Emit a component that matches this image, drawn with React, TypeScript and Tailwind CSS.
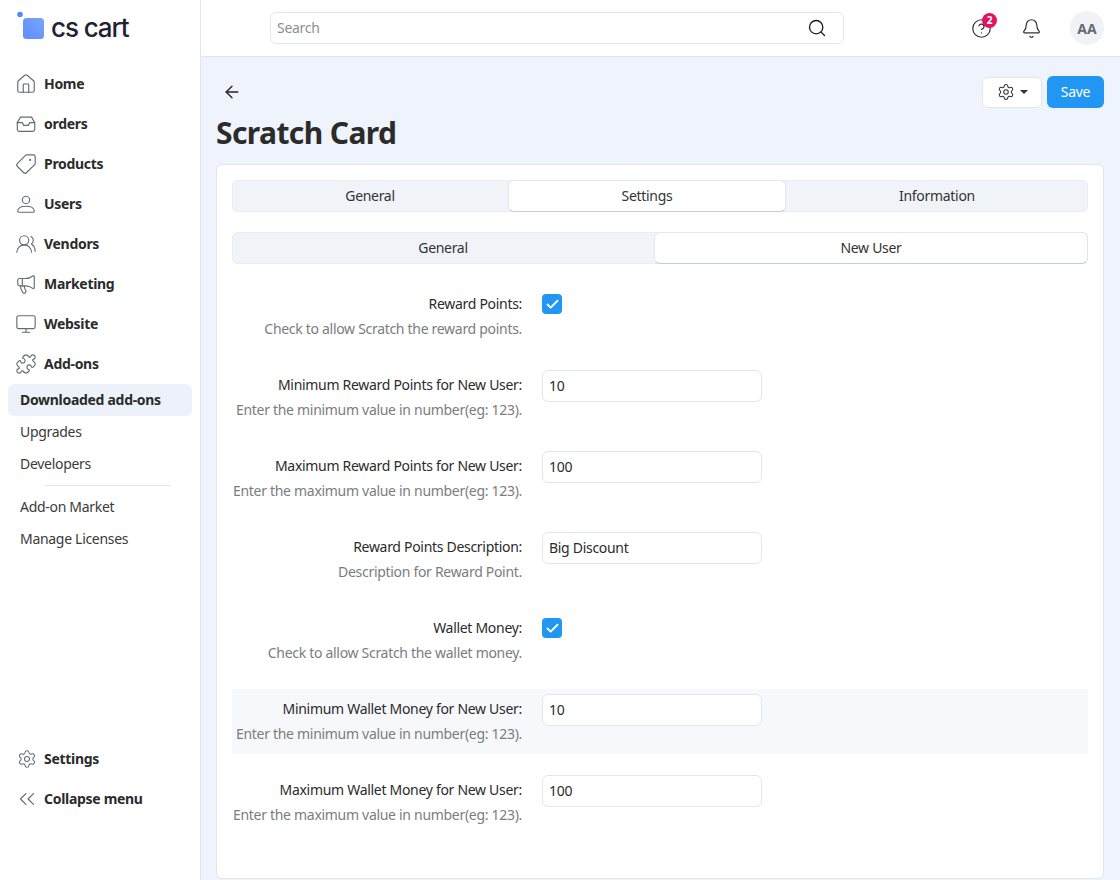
import { ArrowLeft, Bell, Check, ChevronsLeft, CircleHelp, House, Megaphone, Monitor, Puzzle, Search, Settings, Tag, UsersRound } from "lucide-react";
import type { ReactNode } from "react";

const ic = { size: 22, strokeWidth: 1.25 };

function InboxIcon() {
  return (
    <svg width="22" height="22" viewBox="0 0 24 24" fill="none" stroke="currentColor" strokeWidth="1.25" strokeLinejoin="round" strokeLinecap="round">
      <path d="M6 4.5h12l3.5 6v7.5a2 2 0 0 1-2 2h-15a2 2 0 0 1-2-2v-7.5z" />
      <path d="M2.5 10.5H8l1.5 3h5l1.5-3h5.5" />
    </svg>
  );
}

function UserIcon() {
  return (
    <svg width="22" height="22" viewBox="0 0 24 24" fill="none" stroke="currentColor" strokeWidth="1.25" strokeLinejoin="round">
      <circle cx="12" cy="7.5" r="4" />
      <path d="M4 21c-.6 0-1-.4-1-1 0-3.2 3.4-5.5 9-5.5s9 2.3 9 5.5c0 .6-.4 1-1 1z" />
    </svg>
  );
}

function NavItem({ icon, label }: { icon: ReactNode; label: string }) {
  return (
    <div className="flex h-10 items-center pl-[15px]">
      <span className="flex w-[29px] text-[#666b70]">{icon}</span>
      <span className="pb-[2px] text-[14px] font-bold text-[#2b2b2b]">{label}</span>
    </div>
  );
}

function SubItem({ label, active }: { label: string; active?: boolean }) {
  return (
    <div className={`mx-2 flex h-8 items-center rounded-md px-3 pb-[2px] text-[14px] ${active ? "bg-[#edf1f9] font-bold text-[#2b2b2b]" : "text-[#3a3a3a]"}`}>
      {label}
    </div>
  );
}

function Sidebar() {
  return (
    <aside className="flex h-[880px] w-[201px] shrink-0 flex-col border-r border-[#e2e6ee] bg-white pb-[61px]">
      <div className="flex h-[64px] shrink-0 items-start pl-[17px] pt-[11px]">
        <svg width="30" height="28" viewBox="0 0 30 28">
          <defs>
            <linearGradient id="logo" x1="0" y1="1" x2="1" y2="0">
              <stop offset="0" stopColor="#5f8bff" />
              <stop offset="1" stopColor="#78a6fb" />
            </linearGradient>
          </defs>
          <circle cx="3" cy="3.5" r="2.8" fill="#4f8df5" />
          <rect x="6" y="7" width="21" height="21" rx="3.5" fill="url(#logo)" />
        </svg>
        <span className="ml-[4px] mt-[1px] text-[26px] font-medium leading-[32px] tracking-[-1.1px] text-[#1f2233] [font-family:Inter,sans-serif]">cs cart</span>
      </div>
      <NavItem icon={<House {...ic} />} label="Home" />
      <NavItem icon={<InboxIcon />} label="orders" />
      <NavItem icon={<Tag {...ic} className="-scale-x-100" />} label="Products" />
      <NavItem icon={<UserIcon />} label="Users" />
      <NavItem icon={<UsersRound {...ic} />} label="Vendors" />
      <NavItem icon={<Megaphone {...ic} />} label="Marketing" />
      <NavItem icon={<Monitor {...ic} />} label="Website" />
      <NavItem icon={<Puzzle {...ic} />} label="Add-ons" />
      <SubItem label="Downloaded add-ons" active />
      <SubItem label="Upgrades" />
      <SubItem label="Developers" />
      <div className="my-[5px] ml-[45px] mr-[30px] h-px bg-[#dfe4ea]" />
      <SubItem label="Add-on Market" />
      <SubItem label="Manage Licenses" />
      <div className="mt-auto">
        <NavItem icon={<Settings size={20} strokeWidth={1.25} className="ml-[2px]" />} label="Settings" />
        <NavItem icon={<ChevronsLeft size={26} strokeWidth={1.1} className="-my-1 -ml-[1px]" />} label="Collapse menu" />
      </div>
    </aside>
  );
}

function Header() {
  return (
    <header className="flex h-[57px] shrink-0 items-center border-b border-[#e2e6ee] bg-white pl-[69px] pr-4">
      <div className="flex h-8 w-[574px] shrink-0 items-center justify-between rounded-md border border-[#e2e6ee] px-[6px] pr-4">
        <span className="pb-[2px] text-[14px] text-[#8a8f96]">Search</span>
        <Search size={20} strokeWidth={1.6} className="text-[#1c1c1c]" />
      </div>
      <div className="relative ml-[127px] text-[#333]">
        <CircleHelp size={21} strokeWidth={1.4} />
        <span className="absolute -right-[5px] -top-[5px] flex h-[15px] w-[15px] items-center justify-center rounded-full bg-[#df1360] text-[10px] font-bold leading-none text-white">2</span>
      </div>
      <Bell size={21} strokeWidth={1.4} className="ml-[29px] text-[#333]" />
      <div className="ml-[28px] flex h-[34px] w-[34px] items-center justify-center rounded-full bg-[#f0f2f6] text-[14px] font-bold tracking-normal text-[#666b73]">AA</div>
    </header>
  );
}

function CheckBox() {
  return (
    <span className="mt-[5px] flex h-5 w-5 items-center justify-center rounded-[4px] bg-[#2196f3] text-white">
      <Check size={15} strokeWidth={3} />
    </span>
  );
}

function Row({ label, hint, value, check, shaded }: { label: string; hint: string; value?: string; check?: boolean; shaded?: boolean }) {
  return (
    <div className={`mb-4 flex h-[65px] pt-[5px] ${shaded ? "bg-[#f7f8fb]" : ""}`}>
      <div className="w-[290px] shrink-0 pt-[5px] text-right">
        <div className="text-[14px] leading-[20px] text-[#2b2b2b]">{label}</div>
        <div className="mt-[5px] whitespace-nowrap text-[14px] leading-[20px] text-[#7a7d80]">{hint}</div>
      </div>
      <div className="ml-5">
        {check ? (
          <CheckBox />
        ) : (
          <div className="flex h-8 w-[220px] items-center rounded-md border border-[#e2e6ee] bg-white px-[6px] pb-[2px] text-[14px] text-[#2b2b2b]">{value}</div>
        )}
      </div>
    </div>
  );
}

function Tab({ label, active, className }: { label: string; active?: boolean; className: string }) {
  return (
    <div className={`flex items-center justify-center rounded-md pb-[2px] text-[14px] text-[#333] ${active ? "border border-[#e2e6ee] border-b-[#c3cde0] bg-white" : ""} ${className}`}>
      {label}
    </div>
  );
}

export default function App() {
  return (
    <div className="flex h-[880px] w-[1120px] overflow-hidden bg-[#eff3fb] tracking-[-0.3px] [font-family:'Noto_Sans',sans-serif]">
      <Sidebar />
      <div className="flex min-w-0 flex-1 flex-col">
        <Header />
        <main className="flex flex-1 flex-col pb-px pl-[15px] pr-4">
          <div className="flex h-[50px] shrink-0 items-center justify-between pt-[20px]">
            <ArrowLeft size={20} strokeWidth={1.6} className="ml-[6px] text-[#222]" />
            <div className="flex items-center gap-[5px]">
              <button className="flex h-[31px] w-[60px] items-center justify-center gap-[5px] rounded-md border border-[#e2e6ee] bg-white text-[#333]">
                <Settings size={18} strokeWidth={1.4} />
                <span className="h-0 w-0 border-x-[4px] border-t-[4px] border-x-transparent border-t-[#333]" />
              </button>
              <button className="h-8 w-[57px] rounded-md bg-[#2196f3] pb-[2px] text-[14px] text-white">Save</button>
            </div>
          </div>
          <h1 className="mt-[5px] h-[52px] shrink-0 text-[30px] font-bold leading-[42px] tracking-[-0.6px] text-[#2b2b2b]">Scratch Card</h1>
          <div className="flex-1 rounded-md border border-[#e2e6ee] bg-white px-[15px] pt-[15px]">
            <div className="flex h-8 rounded-md bg-[#f0f3f8] shadow-[inset_0_0_0_1px_#e8ecf3]">
              <Tab label="General" className="w-[276px]" />
              <Tab label="Settings" active className="w-[278px]" />
              <Tab label="Information" className="flex-1" />
            </div>
            <div className="mt-5 flex h-8 rounded-md bg-[#f0f3f8] shadow-[inset_0_0_0_1px_#e8ecf3]">
              <Tab label="General" className="w-[422px]" />
              <Tab label="New User" active className="flex-1" />
            </div>
            <div className="mt-[20px]">
              <Row label="Reward Points:" hint="Check to allow Scratch the reward points." check />
              <Row label="Minimum Reward Points for New User:" hint="Enter the minimum value in number(eg: 123)." value="10" />
              <Row label="Maximum Reward Points for New User:" hint="Enter the maximum value in number(eg: 123)." value="100" />
              <Row label="Reward Points Description:" hint="Description for Reward Point." value="Big Discount" />
              <Row label="Wallet Money:" hint="Check to allow Scratch the wallet money." check />
              <Row label="Minimum Wallet Money for New User:" hint="Enter the minimum value in number(eg: 123)." value="10" shaded />
              <Row label="Maximum Wallet Money for New User:" hint="Enter the maximum value in number(eg: 123)." value="100" />
            </div>
          </div>
        </main>
      </div>
    </div>
  );
}
